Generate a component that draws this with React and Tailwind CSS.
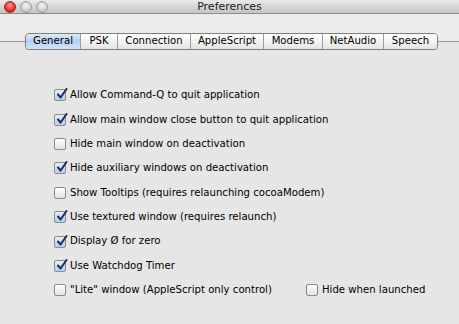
const tabs = [
  { label: 'General', w: 'w-[54px]' },
  { label: 'PSK', w: 'w-[37px]' },
  { label: 'Connection', w: 'w-[73px]' },
  { label: 'AppleScript', w: 'w-[73px]' },
  { label: 'Modems', w: 'w-[59px]' },
  { label: 'NetAudio', w: 'w-[61px]' },
  { label: 'Speech', w: 'w-[54px]' },
];

const options = [
  { label: 'Allow Command-Q to quit application', checked: true },
  { label: 'Allow main window close button to quit application', checked: true },
  { label: 'Hide main window on deactivation', checked: false },
  { label: 'Hide auxiliary windows on deactivation', checked: true },
  { label: 'Show Tooltips (requires relaunching cocoaModem)', checked: false },
  { label: 'Use textured window (requires relaunch)', checked: true },
  { label: 'Display Ø for zero', checked: true },
  { label: 'Use Watchdog Timer', checked: true },
];

const Checkbox = ({ checked }) => (
  <span
    className={`relative w-[12px] h-[12px] shrink-0 rounded-[2px] border border-[#8c8c8c] ${
      checked ? 'bg-gradient-to-b from-[#e4eefb] to-[#b7cdea]' : 'bg-gradient-to-b from-white to-[#e2e2e2]'
    }`}
  >
    {checked && (
      <svg className="absolute left-[1px] -top-[2px]" width="12" height="12" viewBox="0 0 12 12">
        <path d="M2 6.5 L4.6 9.5 L10.5 1" fill="none" stroke="#1b2f5c" strokeWidth="2" strokeLinecap="round" strokeLinejoin="round" />
      </svg>
    )}
  </span>
);

const Option = ({ label, checked }) => (
  <div className="flex items-center gap-[4px] h-[24.4px]">
    <Checkbox checked={checked} />
    <span className="text-[10.15px] text-black leading-none">{label}</span>
  </div>
);

const Light = ({ red }) => (
  <span
    className={`w-[12px] h-[12px] rounded-full border ${
      red
        ? 'border-[#a5211e] bg-[radial-gradient(circle_at_50%_35%,#ff9c96,#e0302b_60%,#b81b17)]'
        : 'border-[#9c9c9c] bg-[radial-gradient(circle_at_50%_35%,#f4f4f4,#cfcfcf_60%,#b5b5b5)]'
    }`}
  />
);

export default function App() {
  return (
    <div
      className="w-[459px] h-[324px] overflow-hidden flex flex-col bg-[#ebebeb]"
      style={{ fontFamily: '"DejaVu Sans", "Liberation Sans", sans-serif' }}
    >
      {/* title bar */}
      <div className="relative h-[14px] shrink-0 flex items-center bg-gradient-to-b from-[#eaeaea] to-[#c4c4c4] border-b border-[#8e8e8e]">
        <div className="flex items-center gap-[4px] pl-[4px]">
          <Light red />
          <Light />
          <Light />
        </div>
        <span className="absolute inset-x-0 text-center text-[11px] leading-none text-[#222]">Preferences</span>
      </div>

      {/* tab strip */}
      <div className="flex items-center mt-[19px] bg-[linear-gradient(#ebebeb_50%,#e6e6e6_50%)]">
        <div className="w-[25px] h-px bg-[#9a9a9a]" />
        <div className="flex h-[17px] rounded-[4px] border border-[#7f7f7f] overflow-hidden shadow-[0_1px_1px_rgba(0,0,0,0.15)]">
          {tabs.map((t, i) => (
            <div
              key={t.label}
              className={`${t.w} flex items-center justify-center text-[10.15px] leading-none text-black ${
                i > 0 ? 'border-l border-[#9d9d9d]' : ''
              } ${
                i === 0
                  ? 'bg-gradient-to-b from-[#dfeafb] via-[#b4cff2] to-[#d4e5fb]'
                  : 'bg-gradient-to-b from-white via-[#f3f3f3] to-[#e4e4e4]'
              }`}
            >
              {t.label}
            </div>
          ))}
        </div>
        <div className="flex-1 h-px bg-[#9a9a9a]" />
      </div>

      {/* options */}
      <div className="flex-1 flex flex-col pl-[54px] pt-[33px] bg-[#e6e6e6]">
        {options.map((o) => (
          <Option key={o.label} {...o} />
        ))}
        <div className="flex items-center h-[24.4px]">
          <div className="w-[252px] flex items-center gap-[4px]">
            <Checkbox checked={false} />
            <span className="text-[10.15px] text-black leading-none">"Lite" window (AppleScript only control)</span>
          </div>
          <div className="flex items-center gap-[4px]">
            <Checkbox checked={false} />
            <span className="text-[10.15px] text-black leading-none">Hide when launched</span>
          </div>
        </div>
      </div>
    </div>
  );
}
